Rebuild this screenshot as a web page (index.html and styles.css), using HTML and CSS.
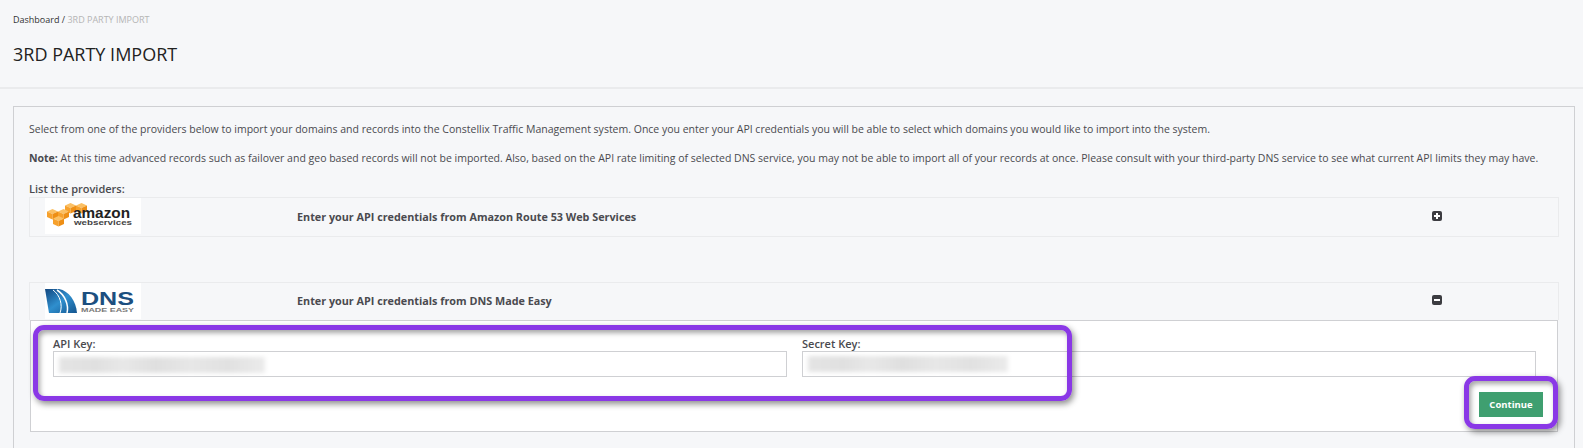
FILE: index.html
```html
<!DOCTYPE html>
<html lang="en">
  <head>
    <meta charset="UTF-8" />
    <title>3rd Party Import</title>
    <link rel="stylesheet" href="styles.css">
  </head>
  <body>
    <div class="page-head">
      <div class="crumbs"><a>Dashboard</a> / <span>3RD PARTY IMPORT</span></div>
      <h1>3RD PARTY IMPORT</h1>
    </div>

    <div class="card">
      <p class="first">Select from one of the providers below to import your domains and records into the Constellix Traffic Management system. Once you enter your API credentials you will be able to select which domains you would like to import into the system.</p>
      <p class="note"><b>Note:</b> At this time advanced records such as failover and geo based records will not be imported. Also, based on the API rate limiting of selected DNS service, you may not be able to import all of your records at once. Please consult with your third-party DNS service to see what current API limits they may have.</p>
      <div class="list-title">List the providers:</div>

      <!-- Amazon -->
      <div class="provider">
        <div class="logo">
          <svg width="96" height="36" viewBox="0 0 96 36">
            <defs>
              <g id="cube">
                <path d="M5.5 0l5.5 2.5-5.5 2.5L0 2.5z" fill="#fbc064"/>
                <path d="M0 2.5l5.5 2.5v5.5L0 8z" fill="#f7a12c"/>
                <path d="M11 2.5L5.5 5v5.5L11 8z" fill="#ee8f15"/>
              </g>
            </defs>
            <use href="#cube" x="20" y="5"/>
            <use href="#cube" x="31" y="5"/>
            <use href="#cube" x="2" y="11"/>
            <use href="#cube" x="13" y="11"/>
            <use href="#cube" x="8" y="18"/>
            <text x="28" y="20" class="aws-big" textLength="57" lengthAdjust="spacingAndGlyphs">amazon</text>
            <text x="29" y="27" class="aws-small" textLength="58" lengthAdjust="spacingAndGlyphs">webservices</text>
          </svg>
        </div>
        <div class="provider-title">Enter your API credentials from Amazon Route 53 Web Services</div>
        <span class="toggle">
          <svg width="10" height="10" viewBox="0 0 10 10"><rect x="4" y="2" width="2" height="6" fill="#fff"/><rect x="2" y="4" width="6" height="2" fill="#fff"/></svg>
        </span>
      </div>

      <div class="spacer"></div>

      <!-- DNS Made Easy -->
      <div class="provider open">
        <div class="logo">
          <svg width="96" height="36" viewBox="0 0 96 36">
            <defs>
              <linearGradient id="dme" x1="0" y1="0" x2="1" y2="1">
                <stop offset="0" stop-color="#12467f"/>
                <stop offset="0.5" stop-color="#2f8fce"/>
                <stop offset="1" stop-color="#14558f"/>
              </linearGradient>
            </defs>
            <path d="M0 6H14C24 8 31 18 32 30H4Z" fill="url(#dme)"/>
            <path d="M8 7C15 12 18 22 15 30" fill="none" stroke="#fff" stroke-width="1"/>
            <path d="M12 7C20 12 24 22 22 30" fill="none" stroke="#fff" stroke-width="1.5"/>
            <text x="36" y="22" class="dme-big" textLength="53" lengthAdjust="spacingAndGlyphs">DNS</text>
            <text x="36" y="29" class="dme-small" textLength="53" lengthAdjust="spacingAndGlyphs">MADE EASY</text>
          </svg>
        </div>
        <div class="provider-title">Enter your API credentials from DNS Made Easy</div>
        <span class="toggle">
          <svg width="10" height="10" viewBox="0 0 10 10"><rect x="2" y="4" width="6" height="2" fill="#fff"/></svg>
        </span>
      </div>

      <div class="panel">
        <div class="fields">
          <div class="field">
            <label>API Key:</label>
            <div class="input"><span class="blur"></span></div>
          </div>
          <div class="field">
            <label>Secret Key:</label>
            <div class="input"><span class="blur second"></span></div>
          </div>
        </div>
        <div class="actions">
          <button>Continue</button>
        </div>
      </div>
    </div>

    <!-- annotations drawn over the screenshot -->
    <div class="mark mark-fields"></div>
    <div class="mark mark-button"></div>
  </body>
</html>
```

FILE: styles.css
```css
html,
body {
  height: 448px;
  overflow: hidden;
}
body {
  margin: 0;
  font-family: "Open Sans", Arial, sans-serif;
  font-size: 11px;
  color: #4a4a4f;
  background-color: #f6f7f9;
}
.page-head {
  height: 89px;
  box-sizing: border-box;
  padding: 13px 13px 0;
  border-bottom: 2px solid #eaebed;
}
.crumbs {
  font-size: 9px;
  line-height: 13px;
  color: #333;
}
.crumbs span {
  color: #b5b5b5;
}
h1 {
  margin: 15px 0 0;
  font-size: 18px;
  font-weight: 400;
  line-height: 26px;
  color: #222;
}
.card {
  margin: 17px 8px 0 13px;
  height: 342px;
  box-sizing: border-box;
  padding: 15px 15px 0;
  border: 1px solid #cfd0d3;
  border-bottom: 0;
}
p {
  margin: 0;
  font-size: 10.5px;
  line-height: 15px;
  white-space: nowrap;
}
.note {
  margin-top: 14px;
}
.list-title {
  margin-top: 14px;
  font-weight: 600;
  line-height: 17px;
}
.provider {
  display: flex;
  align-items: center;
  height: 40px;
  box-sizing: border-box;
  padding-bottom: 2px;
  border: 1px solid #eaebed;
}
.provider.open {
  height: 38px;
  padding-bottom: 3px;
  border-bottom: 0;
}
.logo {
  align-self: flex-start;
  width: 96px;
  height: 36px;
  margin-left: 15px;
  background: #fff;
}
.logo svg {
  display: block;
}
.aws-big {
  font-family: "Liberation Sans", Arial, sans-serif;
  font-size: 15px;
  font-weight: 700;
  fill: #222;
}
.aws-small {
  font-family: "Liberation Sans", Arial, sans-serif;
  font-size: 8px;
  font-weight: 700;
  fill: #444;
}
.dme-big {
  font-family: "Liberation Sans", Arial, sans-serif;
  font-size: 18px;
  font-weight: 700;
  fill: #1c4f80;
}
.dme-small {
  font-family: "Liberation Sans", Arial, sans-serif;
  font-size: 6px;
  font-weight: 700;
  fill: #777;
}
.provider-title {
  margin-left: 156px;
  flex: 1;
  font-size: 10.8px;
  font-weight: 700;
}
.toggle {
  display: flex;
  align-items: center;
  justify-content: center;
  width: 10px;
  height: 10px;
  margin-right: 116px;
  border-radius: 2px;
  background: #3c3c41;
}
.spacer {
  height: 45px;
}
.panel {
  height: 112px;
  box-sizing: border-box;
  margin: 0 1px;
  padding: 15px 22px 0;
  background: #fff;
  border: 1px solid #cfd0d3;
}
.fields {
  display: grid;
  grid-template-columns: 734px 734px;
  gap: 15px;
}
label {
  display: block;
  font-weight: 600;
  line-height: 15px;
}
.input {
  height: 26px;
  box-sizing: border-box;
  padding: 5px;
  border: 1px solid #cfd0d3;
  background: #fff;
}
.blur {
  display: block;
  width: 206px;
  height: 16px;
  background: linear-gradient(90deg, #e4e4e4, #e0e0e0 18%, #e8e8e8 31%, #dfdfdf 47%, #e7e7e7 64%, #e1e1e1 82%, #ebebeb);
  filter: blur(2px);
}
.blur.second {
  width: 200px;
  margin-top: -1px;
}
.actions {
  display: flex;
  justify-content: flex-end;
  margin: 15px -8px 0 0;
}
button {
  width: 64px;
  height: 25px;
  padding: 0;
  border: 0;
  background: #3f9f70;
  color: #fff;
  font-family: "Open Sans", Arial, sans-serif;
  font-size: 9.5px;
  font-weight: 700;
}
.mark {
  position: absolute;
  box-sizing: border-box;
  border: 5px solid #8a38e6;
  border-radius: 11px;
  box-shadow: 2px 3px 6px rgba(0, 0, 0, 0.45), inset 2px 3px 5px rgba(0, 0, 0, 0.35);
}
.mark-fields {
  left: 33px;
  top: 325px;
  width: 1039px;
  height: 76px;
}
.mark-button {
  left: 1464px;
  top: 376px;
  width: 94px;
  height: 53px;
}
```
